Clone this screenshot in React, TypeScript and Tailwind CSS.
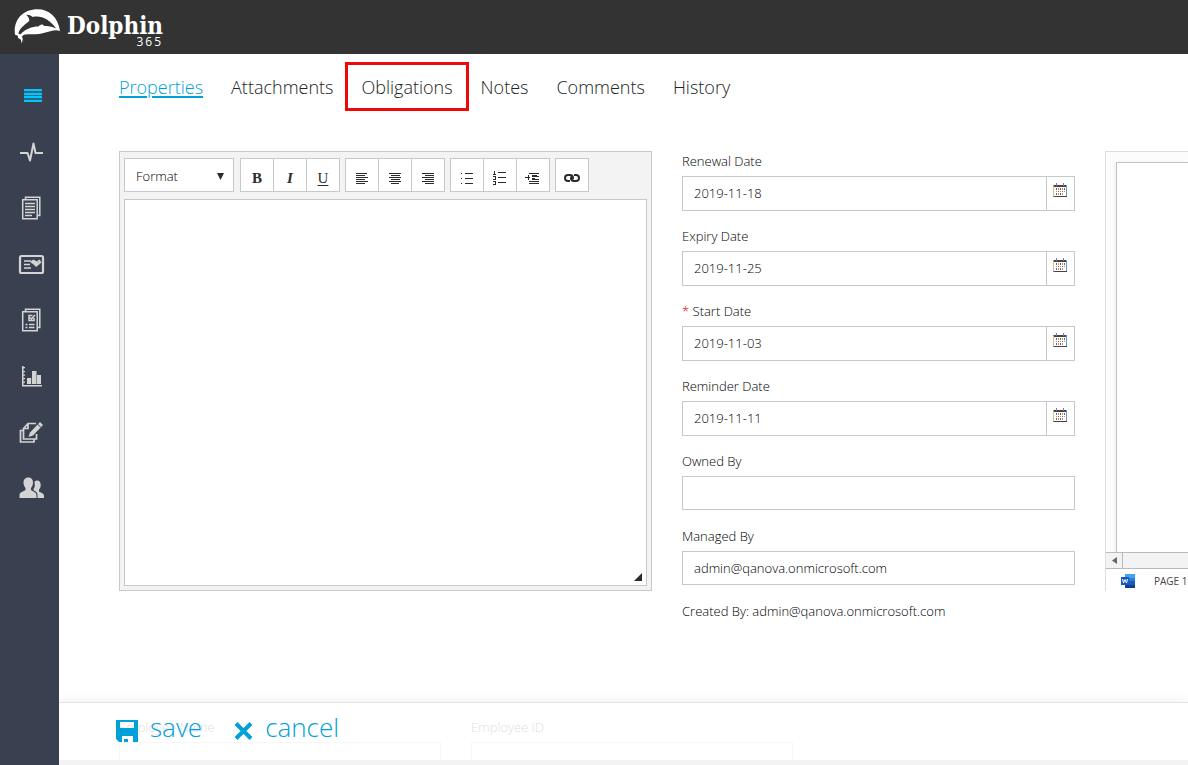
import { useState, type ReactNode } from 'react';

const TABS = ['Properties', 'Attachments', 'Obligations', 'Notes', 'Comments', 'History'];

const DATES = [
  { id: 'renewal', label: 'Renewal Date', value: '2019-11-18', required: false },
  { id: 'expiry', label: 'Expiry Date', value: '2019-11-25', required: false },
  { id: 'start', label: 'Start Date', value: '2019-11-03', required: true },
  { id: 'reminder', label: 'Reminder Date', value: '2019-11-11', required: false },
];

const NAV: { name: string; icon: ReactNode }[] = [
  {
    name: 'Menu',
    icon: (
      <svg className="h-6 w-7 text-[#00c8ff]" viewBox="0 0 28 24" fill="currentColor">
        <path d="M7 5h18v2H7zM7 9h18v2H7zM7 12h18v2H7zM7 16h18v2H7z" />
        <path d="M7 7h18v9H7z" opacity=".3" />
      </svg>
    ),
  },
  {
    name: 'Activity',
    icon: (
      <svg className="h-6 w-7" viewBox="0 0 28 24" fill="none" stroke="currentColor" strokeWidth="2" strokeLinejoin="round">
        <path d="M3 13h7.500l2.500 7.500 3.500-17 2 9.500h7.500" />
      </svg>
    ),
  },
  {
    name: 'Documents',
    icon: (
      <svg className="h-6 w-7" viewBox="0 0 28 24" fill="none" stroke="currentColor" strokeWidth="1.5">
        <path d="M5.700 3.700h14.500v19H5.700zM8.500 3.500V1.200h14.300V19.500h-2.500M8 7.500h10M8 10.500h10M8 13.500h10M8 16.500h10M8 19.500h7" />
      </svg>
    ),
  },
  {
    name: 'Contracts',
    icon: (
      <svg className="h-6 w-7" viewBox="0 0 28 24" fill="none" stroke="currentColor" strokeWidth="1.500">
        <rect x="3" y="4" width="23" height="17" rx="1.500" strokeWidth="2.200" />
        <path d="M7 9h7M7 12.500h6M7 16h7" />
        <path d="M14.500 9l2-1 2.500 1.500 1.500 0 0 2 1.500-1-1-2 1.500-.500 1.500 2.500-3 2.500-2 1.500-3-3-2-1z" fill="currentColor" stroke="currentColor" strokeWidth=".8" />
      </svg>
    ),
  },
  {
    name: 'Checklists',
    icon: (
      <svg className="h-6 w-7" viewBox="0 0 28 24" fill="none" stroke="currentColor" strokeWidth="1.500">
        <path d="M5.700 3.700h14.500v19H5.700zM8.500 3.500V1.200h14.300V19.500h-2.500" />
        <path d="M17 10v2.500h-5V7.500h3.500M13 9.500l1.500 1.500 3.500-4M8.500 16.500h2M12 16.500h5.500M8.500 19.500h2M12 19.500h5.500" />
      </svg>
    ),
  },
  {
    name: 'Reports',
    icon: (
      <svg className="h-6 w-7" viewBox="0 0 28 24" fill="currentColor">
        <path d="M5 2h1.500v19H25v1.500H5zM6 3h2v1.300H6zM6 7h2v1.300H6zM6 10.500h2v1.300H6zM6 14h2v1.300H6zM6 17.500h2v1.300H6z" />
        <path d="M10 14h4.200v6H10zM15 7h4.500v13H15zM20 11H24v9h-4z" />
      </svg>
    ),
  },
  {
    name: 'Edit',
    icon: (
      <svg className="h-6 w-7" viewBox="0 0 28 24" fill="none" stroke="currentColor" strokeWidth="1.700">
        <path d="M19 3.500H11L6.500 8.500v10.500H19.500V14M11 3.500V8.500H6.500M6.500 10.500h-3V22H17v-3" />
        <path d="M23 2l3 3-10 10.500-4.500 1.500 1.500-4.500z" fill="currentColor" stroke="none" />
        <path d="M20.500 4l3.500 3.500" stroke="#394151" strokeWidth="1" />
      </svg>
    ),
  },
  {
    name: 'People',
    icon: (
      <svg className="h-6 w-7" viewBox="0 0 28 24" fill="currentColor">
        <path d="M11.500 1.500c3 0 4.500 2 4.500 5 0 2.500-1 4.500-2 5.500v2c1.500 1.500 5.500 2 5.500 5V22h-17v-3c0-3 4-3.500 6-5v-2c-1-1-2-3-2-5.500 0-3 2-5 5-5z" />
        <path d="M20 4.500c2.500 0 3.700 1.700 3.700 4.500 0 2-.700 3.500-1.700 4.500v2c1.500 1.300 5 1.500 5 4.500v2h-6.500v-3.500c0-2-2-3.200-4-4.200v-1.300c1.300-1.500 1.500-3 1-7 .500-1 1.500-1.500 2.500-1.500z" />
      </svg>
    ),
  },
];

function Lines({ d }: { d: string }) {
  return (
    <svg className="h-4 w-4" viewBox="0 0 16 16" stroke="currentColor" fill="none" shapeRendering="crispEdges">
      <path d={d} />
    </svg>
  );
}

function Group({ children }: { children: ReactNode }) {
  return <div className="flex h-[34px] divide-x divide-[#c8c8c8] border border-[#c8c8c8] bg-white">{children}</div>;
}

function Tool({ label, children }: { label: string; children: ReactNode }) {
  return (
    <button
      type="button"
      aria-label={label}
      className="flex w-[33px] items-center justify-center pt-[5px] font-['Liberation_Serif',serif] text-[15px] leading-4 text-[#2b2b2b] last:w-8 hover:bg-gray-100"
    >
      {children}
    </button>
  );
}

function CalendarIcon() {
  return (
    <svg className="h-[14px] w-[14px]" viewBox="0 0 14 14" shapeRendering="crispEdges">
      <path d="M0 2h14v12H0z" fill="#5b9be0" />
      <path d="M1 4h12v9H1z" fill="#fff" />
      <path d="M1 2h12v2H1zM1 13h13v1H1z" fill="#444" />
      <path d="M3 0h1v3H3zM10 0h1v3h-1z" fill="#8a6fb0" />
      <path d="M0 3h1v10H0z" fill="#e8b880" />
      <path d="M5 5h1v2H5zM9 5h1v2H9zM3 8h1v1H3zM7 8h1v1H7zM11 8h1v1h-1zM5 10h1v2H5zM9 10h1v2H9z" fill="#e8853a" />
      <path d="M3 5h1v2H3zM7 5h1v2H7zM11 5h1v2h-1zM5 8h1v1H5zM9 8h1v1H9zM3 10h1v2H3zM7 10h1v2H7z" fill="#5b6690" />
    </svg>
  );
}

function DateField({ id, label, value, required }: { id: string; label: string; value: string; required: boolean }) {
  return (
    <div>
      <label htmlFor={id} className="mb-[5px] block">
        {required && <span className="text-red-600">* </span>}
        {label}
      </label>
      <div className="flex h-[35px] border border-[#c8c8c8]">
        <input id={id} defaultValue={value} className="min-w-0 flex-1 px-[11px] pb-[2px] outline-none" />
        <button
          type="button"
          aria-label={`Pick ${label}`}
          className="flex w-[28px] border-l border-[#c8c8c8] pt-[6px] pl-[6px]"
        >
          <CalendarIcon />
        </button>
      </div>
    </div>
  );
}

function TextField({ id, label, value }: { id: string; label: string; value: string }) {
  return (
    <div>
      <label htmlFor={id} className="mb-[5px] block">{label}</label>
      <input id={id} defaultValue={value} className="mb-px block h-[34px] w-full border border-[#c8c8c8] px-[11px] outline-none" />
    </div>
  );
}

function Logo() {
  return (
    <a href="#" className="flex items-start text-white">
      <svg className="h-[36px] w-[46px]" viewBox="0 0 47 36" fill="currentColor">
        <path d="M1 27C-1 12 9 1 24 1c12 0 21 8 23 22C40 21 34 25 27 26c-6 1-12 0-17 1l-2 2 1 2-1 5-1-4-3-2 0-2z" />
        <path d="M4.500 26C5.500 20 11 17 15.500 13c.5-2-.5-4-3-6.500 3 0 5 .8 6.500 2.300C28 7 36 11 43 20.500c-4-2-8-3-12-2.500l-2-1.500c-1 0-3 .5-4 2C18 18.500 12 21 6.500 26.500z" fill="#333" />
      </svg>
      <span className="ml-[7px] flex flex-col items-end pt-1">
        <span className="font-['DejaVu_Serif_Condensed','DejaVu_Serif',serif] text-[24px] font-bold leading-7">Dolphin</span>
        <span className="-mt-1 font-['Open_Sans',sans-serif] text-xs font-normal leading-3 tracking-[2px]">365</span>
      </span>
    </a>
  );
}

export default function App() {
  const [tab, setTab] = useState('Properties');

  return (
    <div className="flex h-screen flex-col bg-white font-['Open_Sans','Noto_Sans',sans-serif] text-[13px] font-light leading-5 text-black">
      <header className="flex h-[54px] shrink-0 items-start bg-[#333] pt-2 pl-[14px]">
        <Logo />
      </header>

      <div className="flex min-h-0 flex-1">
        <nav className="w-[59px] shrink-0 bg-[#394151] pt-[14px] text-[#d4d4d4]">
          {NAV.map((n) => (
            <a key={n.name} href="#" aria-label={n.name} className="flex h-14 items-center justify-center pl-[3px]">
              {n.icon}
            </a>
          ))}
        </nav>

        <main className="relative min-w-0 flex-1 overflow-hidden pl-[60px]">
          <div className="flex gap-7 pt-[19px] text-[18px] leading-7 text-[#222]">
            {TABS.map((t) => (
              <a
                key={t}
                href="#"
                onClick={() => setTab(t)}
                className={t === tab ? 'relative text-[#00a1d9] underline decoration-2 underline-offset-2' : 'relative'}
              >
                {t}
                {t === 'Obligations' && (
                  <span className="pointer-events-none absolute -inset-x-4 -top-[11px] -bottom-[10px] border-[3px] border-[#f00808]" />
                )}
              </a>
            ))}
          </div>

          <div className="mt-[50px] grid grid-cols-[533fr_393fr_83fr] gap-[30px]">
            <section className="flex h-[440px] min-w-0 flex-col border border-[#c8c8c8] bg-[#f3f3f3] px-1 pt-[6px] pb-1">
              <div className="mb-[7px] flex gap-[5px]">
                <div className="relative w-[111px] pr-px">
                  <select
                    aria-label="Format"
                    className="h-[34px] w-full appearance-none border border-[#c8c8c8] bg-white pt-px pl-[11px] outline-none"
                  >
                    <option>Format</option>
                  </select>
                  <svg className="pointer-events-none absolute top-[15px] right-[11px] h-[7px] w-[7px]" viewBox="0 0 7 7" fill="#2b2b2b">
                    <path d="M0 0h7L3.500 7z" />
                  </svg>
                </div>
                <Group>
                  <Tool label="Bold"><span className="font-bold">B</span></Tool>
                  <Tool label="Italic"><span className="font-bold italic">I</span></Tool>
                  <Tool label="Underline"><span className="font-normal underline underline-offset-2">U</span></Tool>
                </Group>
                <Group>
                  <Tool label="Align left"><Lines d="M2 3.500h11M2 5.500h9M2 7.500h12M2 9.500h9M2 11.500h12M2 13.500h9" /></Tool>
                  <Tool label="Align center"><Lines d="M2 3.500h12M4 5.500h9M2 7.500h12M4 9.500h9M2 11.500h12M4 13.500h8" /></Tool>
                  <Tool label="Align right"><Lines d="M2 3.500h12M5 5.500h9M2 7.500h12M5 9.500h9M2 11.500h12M5 13.500h9" /></Tool>
                </Group>
                <Group>
                  <Tool label="Bulleted list"><Lines d="M2 3.500h1M2 8.500h1M2 13.500h1M6 3.500h8M6 8.500h8M6 13.500h8" /></Tool>
                  <Tool label="Numbered list"><Lines d="M2 1.500h1M2.500 1v4M1 4.500h3M1 6.500h3M3.500 7v2M1 9.500h3M1 11.500h3M3.500 11v4M1 14.500h3M6 2.500h8M6 7.500h8M6 12.500h8" /></Tool>
                  <Tool label="Indent"><Lines d="M4 3.500h10M7 6.500h7M7 5.500h5M7 8.500h3M7 9.500h7M4 11.500h10M4 13.500h10M0 7.500h5M3.500 5v5" /></Tool>
                </Group>
                <Group>
                  <Tool label="Insert link">
                    <svg className="h-4 w-4" viewBox="0 0 16 16" fill="none" stroke="currentColor" strokeWidth="2">
                      <path d="M6 11H4a3 3 0 0 1 0-6h2q3 0 3 3 0 1-1 1.500M10 5h2a3 3 0 0 1 0 6h-2q-3 0-3-3 0-1 1-1.500" />
                    </svg>
                  </Tool>
                </Group>
              </div>
              <div className="relative flex min-h-0 flex-1">
                <textarea aria-label="Document text" className="w-full resize-none border border-[#c8c8c8] bg-white p-3 outline-none" />
                <svg className="absolute right-[5px] bottom-[5px] h-2 w-2" viewBox="0 0 8 8" fill="#2b2b2b">
                  <path d="M8 0v8H0z" />
                </svg>
              </div>
            </section>

            <form className="flex min-w-0 flex-col gap-[15px]">
              {DATES.map((d) => <DateField key={d.id} {...d} />)}
              <TextField id="owned" label="Owned By" value="" />
              <TextField id="managed" label="Managed By" value="admin@qanova.onmicrosoft.com" />
              <p>Created By: admin@qanova.onmicrosoft.com</p>
            </form>

            <section className="flex h-[440px] min-w-0 flex-col overflow-hidden border-t border-l border-[#dcdee0]">
              <div className="flex-1 bg-[#fcfcfc] pt-[10px] pl-[10px]">
                <div className="h-full border-t border-l border-[#bfc5ca] bg-white shadow" />
              </div>
              <div className="flex h-[17px] shrink-0 border-y border-[#b8bbbe] bg-[#f3f3f3]">
                <button type="button" aria-label="Scroll left" className="flex w-[17px] items-center justify-center border-r border-[#b8bbbe]">
                  <svg className="h-[7px] w-[5px]" viewBox="0 0 5 7" fill="#666"><path d="M5 0v7L0 3.500z" /></svg>
                </button>
              </div>
              <div className="flex h-[22px] shrink-0 items-center whitespace-nowrap pl-[15px] pt-[2px] text-[10px] font-normal text-[#444]">
                <svg className="mr-[19px] h-[14px] w-[14px] shrink-0" viewBox="0 0 14 14">
                  <path d="M4 0h10v4H4z" fill="#41a5ee" />
                  <path d="M4 4h10v3H4z" fill="#2b7cd3" />
                  <path d="M4 7h10v4H4z" fill="#185abd" />
                  <path d="M4 11h10v3H4z" fill="#103f91" />
                  <path d="M0 3h8v8H0z" fill="#185abd" />
                  <path d="M1.500 5l1 4L4 5.500 5.500 9l1-4" fill="none" stroke="#fff" />
                </svg>
                PAGE 1
              </div>
            </section>
          </div>

          <div className="mt-24 flex gap-[30px]">
            <div className="w-[322px]">
              <label htmlFor="employee" className="mb-[5px] block">Employee Name</label>
              <input id="employee" className="block h-[34px] w-full border border-[#c8c8c8]" />
            </div>
            <div className="w-[322px]">
              <label htmlFor="employee-id" className="mb-[5px] block">Employee ID</label>
              <input id="employee-id" className="block h-[34px] w-full border border-[#c8c8c8]" />
            </div>
          </div>

          <footer className="absolute inset-x-0 bottom-0 border-t border-b-[5px] border-t-[#e4e4e4] border-b-[#f3f3f3] bg-white/85 shadow-[0_-2px_10px_rgba(0,0,0,0.06)]">
            <div className="flex h-[57px] items-center gap-8 pb-[10px] pl-[57px] text-[26px] leading-8 text-[#00a1d9]">
              <button type="button" className="flex items-center gap-3">
                <svg className="mt-2 h-[22px] w-[22px]" viewBox="0 0 22 22" fill="currentColor">
                  <path fillRule="evenodd" d="M0 0h22v22h-5v-6H6v6H3l-3-3zM4 2v6h14V2zM8 19h4v3H8z" />
                </svg>
                save
              </button>
              <button type="button" className="flex items-center gap-3">
                <svg className="mt-2 h-[18px] w-[19px]" viewBox="0 0 19 18" fill="none" stroke="currentColor" strokeWidth="4">
                  <path d="M2 1.500l15 15M17 1.500l-15 15" />
                </svg>
                cancel
              </button>
            </div>
          </footer>
        </main>
      </div>
    </div>
  );
}
